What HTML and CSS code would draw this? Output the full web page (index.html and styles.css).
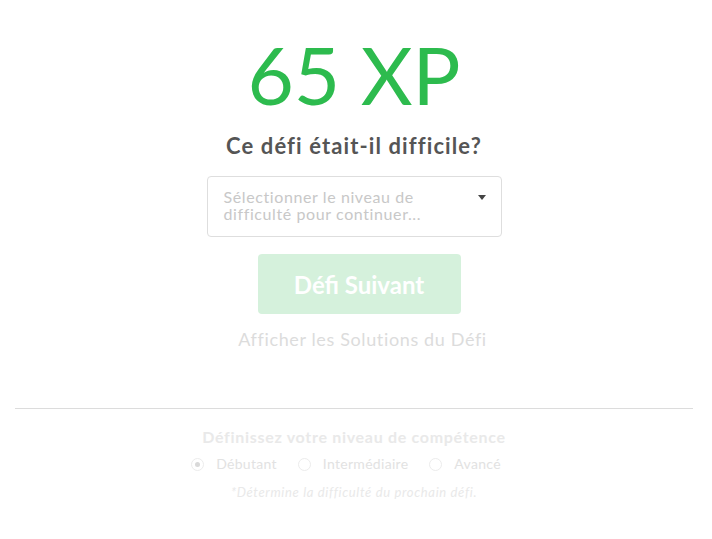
FILE: index.html
```html
<!DOCTYPE html>
<html lang="fr">
<head>
<meta charset="utf-8">
<title>Défi terminé</title>
<link rel="stylesheet" href="styles.css">
</head>
<body>
<div class="page">
  <section class="result">
    <div class="xp">65 XP</div>
    <h2 class="question">Ce défi était-il difficile?</h2>
    <div class="select">
      <span class="placeholder">Sélectionner le niveau de<br>difficulté pour continuer...</span>
      <span class="caret"></span>
    </div>
    <button class="next" type="button">Défi Suivant</button>
    <a class="solutions">Afficher les Solutions du Défi</a>
  </section>
  <hr class="divider">
  <section class="level">
    <h3 class="level-title">Définissez votre niveau de compétence</h3>
    <div class="radios">
      <label class="radio"><span class="dot checked"></span>Débutant</label>
      <label class="radio"><span class="dot"></span>Intermédiaire</label>
      <label class="radio"><span class="dot"></span>Avancé</label>
    </div>
    <p class="note">*Détermine la difficulté du prochain défi.</p>
  </section>
</div>
</body>
</html>
```
FILE: styles.css
```css
* { box-sizing: border-box; }
html, body { margin: 0; padding: 0; background: #fff; }
body { font-family: Lato, "Noto Sans", sans-serif; color: #555; }

.page {
  width: 678px;
  margin-left: 15px;
}

.result {
  display: flex;
  flex-direction: column;
  align-items: center;
  padding-top: 34px;
  padding-bottom: 57px;
}

.xp {
  font-size: 80px;
  line-height: 80px;
  font-weight: 400;
  color: #2dbb4e;
}

.question {
  margin: 19px 0 0;
  font-size: 22px;
  line-height: 26px;
  font-weight: 700;
  letter-spacing: 1.1px;
  color: #555;
}

.select {
  margin-top: 17px;
  width: 295px;
  height: 61px;
  border: 1px solid #dedede;
  border-radius: 4px;
  padding: 11px 15px 0 16px;
  display: flex;
  justify-content: space-between;
  align-items: flex-start;
}

.placeholder {
  font-size: 16px;
  line-height: 17px;
  letter-spacing: 0.6px;
  color: #c8c8c8;
}

.caret {
  margin-top: 7px;
  width: 0;
  height: 0;
  border-left: 4px solid transparent;
  border-right: 4px solid transparent;
  border-top: 5px solid #444;
}

.next {
  margin-top: 17px;
  margin-left: 10px;
  width: 203px;
  height: 60px;
  border: 0;
  border-radius: 4px;
  background: #d5f1dc;
  color: #fff;
  font-family: Lato, "Noto Sans", sans-serif;
  font-size: 24px;
  font-weight: 700;
  padding: 0;
}

.solutions {
  margin-top: 13px;
  margin-left: 17px;
  font-size: 18px;
  line-height: 24px;
  letter-spacing: 0.63px;
  color: #dcdcdc;
}

.divider {
  margin: 0;
  border: 0;
  border-top: 1px solid #dcdcdc;
  height: 0;
}

.level {
  display: flex;
  flex-direction: column;
  align-items: center;
  padding-top: 17px;
}

.level-title {
  margin: 0;
  font-size: 16px;
  line-height: 21px;
  font-weight: 700;
  letter-spacing: 0.7px;
  color: #e9e9e9;
}

.radios {
  margin-top: 8px;
  margin-left: -16px;
  display: flex;
  gap: 21px;
}

.radio {
  display: flex;
  align-items: center;
  gap: 12px;
  font-size: 14px;
  line-height: 18px;
  letter-spacing: 0.3px;
  color: #e2e2e2;
}

.dot {
  width: 13px;
  height: 13px;
  border: 1px solid #ececec;
  border-radius: 50%;
  display: flex;
  align-items: center;
  justify-content: center;
}

.dot.checked::after {
  content: "";
  width: 5px;
  height: 5px;
  border-radius: 50%;
  background: #d9d9d9;
}

.note {
  margin: 10px 0 0;
  font-size: 13px;
  line-height: 18px;
  font-style: italic;
  letter-spacing: 0.66px;
  color: #e9e9e9;
}
```
